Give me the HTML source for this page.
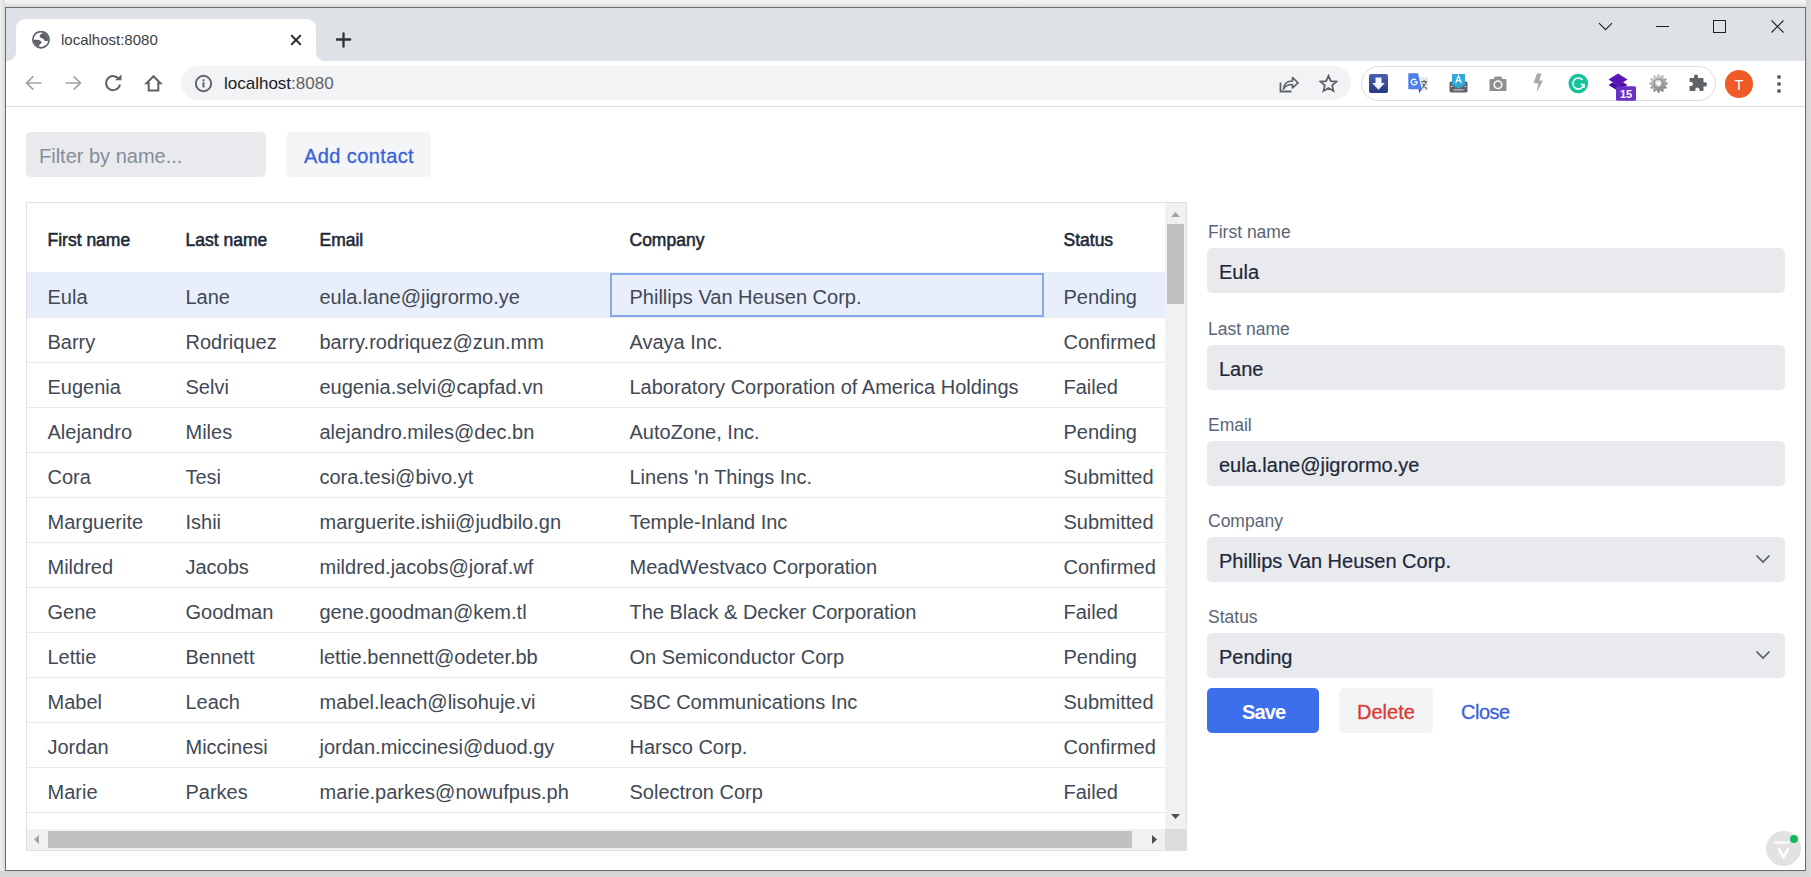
<!DOCTYPE html>
<html><head><meta charset="utf-8">
<style>
*{box-sizing:border-box;margin:0;padding:0}
html,body{width:1811px;height:877px;overflow:hidden;background:#ebebeb;font-family:"Liberation Sans",sans-serif;position:relative}
.a{position:absolute}
.t{position:absolute;white-space:pre;line-height:1}
#winbg{position:absolute;left:5px;top:7px;width:1801px;height:864px;background:#fff}
#frame{position:absolute;left:5px;top:7px;width:1801px;height:864px;border:1px solid #6b6b6b;z-index:50}
#tabstrip{position:absolute;left:6px;top:8px;width:1799px;height:53px;background:#dee1e6}
#tab{position:absolute;left:16px;top:19px;width:300px;height:42px;background:#fff;border-radius:9px 9px 0 0}
#tab:before,#tab:after{content:"";position:absolute;bottom:0;width:9px;height:9px}
#tab:before{left:-9px;background:radial-gradient(circle at 0 0,#dee1e6 8.5px,#fff 9.5px)}
#tab:after{right:-9px;background:radial-gradient(circle at 100% 0,#dee1e6 8.5px,#fff 9.5px)}
#toolbar{position:absolute;left:6px;top:61px;width:1799px;height:46px;background:#fff;border-bottom:1px solid #dadce0}
.hd{font-size:17.5px;font-weight:400;color:#1d2939;-webkit-text-stroke:.55px #1d2939}
.cell{font-size:20px;color:#404955}
.lbl{font-size:17.5px;color:#5a6575}
.val{font-size:20px;color:#1d2939;-webkit-text-stroke:.2px #1d2939}
.med{-webkit-text-stroke:.3px currentColor}
.bt{font-size:20px;font-weight:700}
</style></head><body>
<div class="a" style="left:0;top:0;width:1811px;height:7px;background:linear-gradient(#f4f4f4,#eeeeee 50%,#dcdcdc 85%,#e4e4e4)"></div>
<div class="a" style="left:0;top:0;width:5px;height:877px;background:linear-gradient(90deg,#f0f0f0,#dcdcdc)"></div>
<div class="a" style="left:0;top:871px;width:1811px;height:6px;background:linear-gradient(#d2d2d2,#dadada)"></div>
<div class="a" style="left:1806px;top:0;width:5px;height:877px;background:linear-gradient(90deg,#d4d4d4,#dedede)"></div>
<div id="winbg"></div>
<div id="tabstrip"></div>
<div id="tab"></div>
<!-- tab contents -->
<svg class="a" style="left:32px;top:31px" width="18" height="18" viewBox="0 0 18 18"><defs><clipPath id="gc"><circle cx="9" cy="8.700" r="7.300"/></clipPath></defs><circle cx="9" cy="8.700" r="8.100" fill="none" stroke="#5f6368" stroke-width="1.700"/><g clip-path="url(#gc)" fill="#5f6368"><path d="M10.200 .5v2C8.600 3.400 7.300 4.400 7.600 5.700c.4 1.300 2.800 1.300 3.800 2.200.9.800.8 1.600 1.600 2H17V.5z"/><path d="M0 8.800h3.500c1.800-.2 4 .1 5.300 1.300 1.100.9 1 1.900-.2 2.600-1 .5-1.500 1.300-1.300 2.600V18H0z"/></g></svg>
<div class="t" style="left:61px;top:32px;font-size:15px;color:#3c4043">localhost:8080</div>
<svg class="a" style="left:290px;top:33.500px" width="12" height="12" viewBox="0 0 12 12"><path d="M1.2 1.2l9.600 9.600M10.800 1.200l-9.600 9.600" stroke="#202124" stroke-width="1.9"/></svg>
<svg class="a" style="left:336px;top:32px" width="16" height="16" viewBox="0 0 16 16"><path d="M7.500 1.300v13.400M.8 7.500h13.400" stroke="#303338" stroke-width="2.300" stroke-linecap="round"/></svg>
<!-- window controls -->
<svg class="a" style="left:1598px;top:22px" width="15" height="9" viewBox="0 0 15 9"><path d="M1 1.2l6.5 6.5 6.5-6.5" fill="none" stroke="#202124" stroke-width="1.1"/></svg>
<div class="a" style="left:1656px;top:26px;width:13px;height:1px;background:#202124"></div>
<div class="a" style="left:1713px;top:20px;width:13px;height:13px;border:1px solid #202124"></div>
<svg class="a" style="left:1771px;top:20px" width="13" height="13" viewBox="0 0 13 13"><path d="M.5 .5l12 12M12.5 .5l-12 12" stroke="#202124" stroke-width="1.1"/></svg>

<div id="toolbar"></div>
<!-- nav icons -->
<svg class="a" style="left:25px;top:75px" width="17" height="16" viewBox="0 0 17 16"><path d="M16.5 8H1.8M8.300 1.300L1.600 8l6.700 6.700" fill="none" stroke="#9ea1a6" stroke-width="1.7"/></svg>
<svg class="a" style="left:65px;top:75px" width="17" height="16" viewBox="0 0 17 16"><path d="M.5 8h14.7M8.700 1.300L15.400 8l-6.700 6.700" fill="none" stroke="#9ea1a6" stroke-width="1.7"/></svg>
<svg class="a" style="left:104px;top:74px" width="19" height="18" viewBox="0 0 19 18"><path d="M15.200 5.600A7 7 0 1 0 16 10.500" fill="none" stroke="#5f6368" stroke-width="2"/><path d="M11 6.300h6.500V.6z" fill="#5f6368"/></svg>
<svg class="a" style="left:144px;top:74px" width="19" height="18" viewBox="0 0 19 18"><path d="M9.500 2.200L2.500 9.200h2.200v7.300h9.600V9.200h2.200z" fill="none" stroke="#5f6368" stroke-width="2" stroke-linejoin="miter"/></svg>
<div class="a" style="left:181px;top:66px;width:1170px;height:34px;border-radius:17px;background:#f1f3f4"></div>
<svg class="a" style="left:194px;top:74px" width="19" height="19" viewBox="0 0 19 19"><circle cx="9.500" cy="9.500" r="7.700" fill="none" stroke="#5f6368" stroke-width="1.900"/><rect x="8.500" y="8.200" width="2" height="5.300" fill="#5f6368"/><rect x="8.500" y="5.300" width="2" height="2" fill="#5f6368"/></svg>
<div class="t" style="left:224px;top:75px;font-size:17px;color:#202124">localhost<span style="color:#5f6368">:8080</span></div>
<svg class="a" style="left:1279px;top:74px" width="20" height="19" viewBox="0 0 20 19"><path d="M1.500 8.500v9h11" fill="none" stroke="#5f6368" stroke-width="1.800"/><path d="M4.500 15C5 9.500 8.500 7 13.500 7V3.500L19 8.800l-5.500 5.200V10.500C9.500 10.300 6.500 11.700 4.500 15z" fill="none" stroke="#5f6368" stroke-width="1.700" stroke-linejoin="round"/></svg>
<svg class="a" style="left:1319px;top:74px" width="19" height="19" viewBox="0 0 19 19"><path d="M9.500 1.800l2.300 5.300 5.700.5-4.300 3.800 1.300 5.600-5-3-5 3 1.300-5.600L1.500 7.600l5.700-.5z" fill="none" stroke="#5f6368" stroke-width="1.800" stroke-linejoin="miter"/></svg>
<div class="a" style="left:1361px;top:66px;width:355px;height:35px;border-radius:17.5px;border:1px solid #dadce0"></div>
<!-- download ext -->
<svg class="a" style="left:1369px;top:74px" width="19" height="19" viewBox="0 0 19 19"><defs><linearGradient id="gd" x1="0" y1="0" x2="0" y2="1"><stop offset="0" stop-color="#4a62b0"/><stop offset="1" stop-color="#27387e"/></linearGradient></defs><rect x="0" y="0" width="19" height="19" rx="2" fill="url(#gd)"/><path d="M6.500 3.500h6v5.500h3.300L9.500 15.800 3.200 9h3.300z" fill="#f4f6fb"/></svg>
<!-- translate ext -->
<svg class="a" style="left:1408px;top:73px" width="21" height="21" viewBox="0 0 21 21"><rect x="12.5" y="4" width="7.5" height="13.8" fill="#e9eaeb"/><path d="M13.3 8.6h5.8M16.2 7.3v1.3M18.3 8.6c-.8 3-2.400 5.300-4.800 7M14.600 10.500c.9 2.100 2.300 3.900 4.300 5.200" fill="none" stroke="#5a5d62" stroke-width="1.05"/><path d="M.3 .3H10L13.800 16.300H.3z" fill="#4b7fe9"/><path d="M10.500 16.300l.9 3.600 2.400-3.600z" fill="#3b3eb5"/><path d="M8 6.800A2.900 2.900 0 1 0 9 8.900H6.300" fill="none" stroke="#fff" stroke-width="1.300"/></svg>
<!-- keyboard ext -->
<svg class="a" style="left:1449px;top:73px" width="19" height="20" viewBox="0 0 19 20"><rect x=".5" y="8.500" width="18" height="11" rx="1.500" fill="#5f6368"/><path d="M3 1h13v11l-6.500 3.500L3 12z" fill="#33a7d6"/><path d="M6.700 10L9.500 2.800 12.300 10M7.700 7.700h3.600" fill="none" stroke="#fff" stroke-width="1.300"/><rect x="4.500" y="16.300" width="10" height="1.200" fill="#c9cbce"/><rect x="2" y="13" width="1.200" height="1" fill="#fff"/><rect x="15.800" y="13" width="1.200" height="1" fill="#fff"/></svg>
<!-- camera ext -->
<svg class="a" style="left:1489px;top:75px" width="18" height="17" viewBox="0 0 18 17"><path d="M1.500 4h3l1.500-2.500h6L13.500 4h3c.6 0 1 .4 1 1v10c0 .6-.4 1-1 1h-15c-.6 0-1-.4-1-1V5c0-.6.4-1 1-1z" fill="#8f8f8f"/><circle cx="9" cy="9.800" r="3.800" fill="none" stroke="#fff" stroke-width="1.500"/><circle cx="9" cy="9.800" r="1.500" fill="#8f8f8f"/></svg>
<!-- lightning ext -->
<svg class="a" style="left:1532px;top:73px" width="12" height="20" viewBox="0 0 12 20"><path d="M5 .5h4.500L7.300 7.500l3.700.3L4.500 19.500 6.300 10.500 1.500 10z" fill="#a9a9a9"/></svg>
<!-- grammarly -->
<svg class="a" style="left:1568px;top:73px" width="21" height="21" viewBox="0 0 21 21"><circle cx="10.300" cy="10.500" r="9.800" fill="#15c39a"/><path d="M14.600 7A5.500 5.500 0 1 0 15.500 12.500" fill="none" stroke="#fff" stroke-width="1.500"/><path d="M12.500 11.500h3.500v3.500" fill="none" stroke="#fff" stroke-width="1.500"/></svg>
<!-- purple stack -->
<svg class="a" style="left:1608px;top:73px" width="29" height="28" viewBox="0 0 29 28"><path d="M10 .5l9.500 6-9.500 6L.5 6.500z" fill="#5a14b8"/><path d="M.5 12l4.500-2.800 5 3 5-3 4.500 2.800-9.500 6z" fill="#4a0fa0"/><rect x="8" y="13.200" width="20" height="14.500" rx="1.500" fill="#6b30c6"/><text x="18" y="25" font-family="Liberation Sans" font-weight="bold" font-size="11" fill="#fff" text-anchor="middle">15</text></svg>
<!-- gear -->
<svg class="a" style="left:1649px;top:74px" width="19" height="19" viewBox="0 0 19 19"><defs><radialGradient id="gg" cx=".4" cy=".3" r=".75"><stop offset="0" stop-color="#dcdcdc"/><stop offset=".6" stop-color="#a8a8a8"/><stop offset="1" stop-color="#6e6e6e"/></radialGradient></defs><path d="M18.65 8.54 L18.65 10.46 L16.81 10.66 L16.41 12.15 L17.90 13.24 L16.94 14.91 L15.25 14.16 L14.16 15.25 L14.91 16.94 L13.24 17.90 L12.15 16.41 L10.66 16.81 L10.46 18.65 L8.54 18.65 L8.34 16.81 L6.85 16.41 L5.76 17.90 L4.09 16.94 L4.84 15.25 L3.75 14.16 L2.06 14.91 L1.10 13.24 L2.59 12.15 L2.19 10.66 L0.35 10.46 L0.35 8.54 L2.19 8.34 L2.59 6.85 L1.10 5.76 L2.06 4.09 L3.75 4.84 L4.84 3.75 L4.09 2.06 L5.76 1.10 L6.85 2.59 L8.34 2.19 L8.54 0.35 L10.46 0.35 L10.66 2.19 L12.15 2.59 L13.24 1.10 L14.91 2.06 L14.16 3.75 L15.25 4.84 L16.94 4.09 L17.90 5.76 L16.41 6.85 L16.81 8.34Z" fill="url(#gg)"/><circle cx="9.5" cy="9.5" r="4.6" fill="none" stroke="#8a8a8a" stroke-width="1.2"/><circle cx="9.5" cy="9.5" r="2.4" fill="#fafafa"/></svg>
<!-- puzzle -->
<svg class="a" style="left:1689px;top:74px" width="19" height="18" viewBox="0 0 19 18"><path d="M7 .5c1.300 0 2 .9 2 2V4h4.500c.6 0 1 .4 1 1v3.300h1.300c1.200 0 2.200.9 2.200 2.100s-1 2.100-2.200 2.100h-1.300V16c0 .6-.4 1-1 1H10.500v-1.300c0-1.200-.9-2.200-2.100-2.200s-2.100 1-2.100 2.200V17H1.500c-.6 0-1-.4-1-1V12h1.300c1.200 0 2.100-.9 2.100-2.100S3 7.800 1.800 7.800H.5V5c0-.6.4-1 1-1H5V2.500c0-1.100.7-2 2-2z" fill="#5f6368"/></svg>
<!-- avatar -->
<div class="a" style="left:1725px;top:70px;width:28px;height:28px;border-radius:50%;background:#f05a24"></div>
<div class="t" style="left:1731px;top:78px;font-size:14.5px;color:#fff;width:16px;text-align:center">T</div>
<div class="a" style="left:1776.500px;top:74.5px;width:4px;height:4px;border-radius:50%;background:#5f6368;box-shadow:0 7px 0 #5f6368,0 14px 0 #5f6368"></div>
<div id="page">
<!-- toolbar row -->
<div class="a" style="left:26px;top:132px;width:240px;height:45px;border-radius:5px;background:#e9eaee"></div>
<div class="t ph" style="left:39px;top:146px;font-size:20px;color:#858d97">Filter by name...</div>
<div class="a" style="left:286px;top:132px;width:145px;height:45px;border-radius:5px;background:#f3f5f7"></div>
<div class="t med" style="left:304px;top:146px;font-size:20px;color:#3a62d8;letter-spacing:.4px">Add contact</div>
<!-- grid -->
<div class="a" style="left:26px;top:202px;width:1161px;height:649px;border:1px solid #e0e0e0;background:#fff"></div>
<div class="a" style="left:27px;top:272px;width:1138px;height:45px;background:#e9eefb"></div>
<div class="a" style="left:27px;top:317px;width:1138px;height:1px;background:#e9eaec"></div>
<div class="a" style="left:27px;top:362px;width:1138px;height:1px;background:#e9eaec"></div>
<div class="a" style="left:27px;top:407px;width:1138px;height:1px;background:#e9eaec"></div>
<div class="a" style="left:27px;top:452px;width:1138px;height:1px;background:#e9eaec"></div>
<div class="a" style="left:27px;top:497px;width:1138px;height:1px;background:#e9eaec"></div>
<div class="a" style="left:27px;top:542px;width:1138px;height:1px;background:#e9eaec"></div>
<div class="a" style="left:27px;top:587px;width:1138px;height:1px;background:#e9eaec"></div>
<div class="a" style="left:27px;top:632px;width:1138px;height:1px;background:#e9eaec"></div>
<div class="a" style="left:27px;top:677px;width:1138px;height:1px;background:#e9eaec"></div>
<div class="a" style="left:27px;top:722px;width:1138px;height:1px;background:#e9eaec"></div>
<div class="a" style="left:27px;top:767px;width:1138px;height:1px;background:#e9eaec"></div>
<div class="a" style="left:27px;top:812px;width:1138px;height:1px;background:#e9eaec"></div>
<div class="t hd" style="left:47.5px;top:232px">First name</div>
<div class="t hd" style="left:185.5px;top:232px">Last name</div>
<div class="t hd" style="left:319.5px;top:232px">Email</div>
<div class="t hd" style="left:629.5px;top:232px">Company</div>
<div class="t hd" style="left:1063.5px;top:232px">Status</div>
<div class="t cell" style="left:47.5px;top:287px">Eula</div>
<div class="t cell" style="left:185.5px;top:287px">Lane</div>
<div class="t cell" style="left:319.5px;top:287px">eula.lane@jigrormo.ye</div>
<div class="t cell" style="left:629.5px;top:287px">Phillips Van Heusen Corp.</div>
<div class="t cell" style="left:1063.5px;top:287px">Pending</div>
<div class="t cell" style="left:47.5px;top:332px">Barry</div>
<div class="t cell" style="left:185.5px;top:332px">Rodriquez</div>
<div class="t cell" style="left:319.5px;top:332px">barry.rodriquez@zun.mm</div>
<div class="t cell" style="left:629.5px;top:332px">Avaya Inc.</div>
<div class="t cell" style="left:1063.5px;top:332px">Confirmed</div>
<div class="t cell" style="left:47.5px;top:377px">Eugenia</div>
<div class="t cell" style="left:185.5px;top:377px">Selvi</div>
<div class="t cell" style="left:319.5px;top:377px">eugenia.selvi@capfad.vn</div>
<div class="t cell" style="left:629.5px;top:377px">Laboratory Corporation of America Holdings</div>
<div class="t cell" style="left:1063.5px;top:377px">Failed</div>
<div class="t cell" style="left:47.5px;top:422px">Alejandro</div>
<div class="t cell" style="left:185.5px;top:422px">Miles</div>
<div class="t cell" style="left:319.5px;top:422px">alejandro.miles@dec.bn</div>
<div class="t cell" style="left:629.5px;top:422px">AutoZone, Inc.</div>
<div class="t cell" style="left:1063.5px;top:422px">Pending</div>
<div class="t cell" style="left:47.5px;top:467px">Cora</div>
<div class="t cell" style="left:185.5px;top:467px">Tesi</div>
<div class="t cell" style="left:319.5px;top:467px">cora.tesi@bivo.yt</div>
<div class="t cell" style="left:629.5px;top:467px">Linens 'n Things Inc.</div>
<div class="t cell" style="left:1063.5px;top:467px">Submitted</div>
<div class="t cell" style="left:47.5px;top:512px">Marguerite</div>
<div class="t cell" style="left:185.5px;top:512px">Ishii</div>
<div class="t cell" style="left:319.5px;top:512px">marguerite.ishii@judbilo.gn</div>
<div class="t cell" style="left:629.5px;top:512px">Temple-Inland Inc</div>
<div class="t cell" style="left:1063.5px;top:512px">Submitted</div>
<div class="t cell" style="left:47.5px;top:557px">Mildred</div>
<div class="t cell" style="left:185.5px;top:557px">Jacobs</div>
<div class="t cell" style="left:319.5px;top:557px">mildred.jacobs@joraf.wf</div>
<div class="t cell" style="left:629.5px;top:557px">MeadWestvaco Corporation</div>
<div class="t cell" style="left:1063.5px;top:557px">Confirmed</div>
<div class="t cell" style="left:47.5px;top:602px">Gene</div>
<div class="t cell" style="left:185.5px;top:602px">Goodman</div>
<div class="t cell" style="left:319.5px;top:602px">gene.goodman@kem.tl</div>
<div class="t cell" style="left:629.5px;top:602px">The Black &amp; Decker Corporation</div>
<div class="t cell" style="left:1063.5px;top:602px">Failed</div>
<div class="t cell" style="left:47.5px;top:647px">Lettie</div>
<div class="t cell" style="left:185.5px;top:647px">Bennett</div>
<div class="t cell" style="left:319.5px;top:647px">lettie.bennett@odeter.bb</div>
<div class="t cell" style="left:629.5px;top:647px">On Semiconductor Corp</div>
<div class="t cell" style="left:1063.5px;top:647px">Pending</div>
<div class="t cell" style="left:47.5px;top:692px">Mabel</div>
<div class="t cell" style="left:185.5px;top:692px">Leach</div>
<div class="t cell" style="left:319.5px;top:692px">mabel.leach@lisohuje.vi</div>
<div class="t cell" style="left:629.5px;top:692px">SBC Communications Inc</div>
<div class="t cell" style="left:1063.5px;top:692px">Submitted</div>
<div class="t cell" style="left:47.5px;top:737px">Jordan</div>
<div class="t cell" style="left:185.5px;top:737px">Miccinesi</div>
<div class="t cell" style="left:319.5px;top:737px">jordan.miccinesi@duod.gy</div>
<div class="t cell" style="left:629.5px;top:737px">Harsco Corp.</div>
<div class="t cell" style="left:1063.5px;top:737px">Confirmed</div>
<div class="t cell" style="left:47.5px;top:782px">Marie</div>
<div class="t cell" style="left:185.5px;top:782px">Parkes</div>
<div class="t cell" style="left:319.5px;top:782px">marie.parkes@nowufpus.ph</div>
<div class="t cell" style="left:629.5px;top:782px">Solectron Corp</div>
<div class="t cell" style="left:1063.5px;top:782px">Failed</div>
<div class="a" style="left:610px;top:273px;width:434px;height:44px;border:2px solid #88a9e8"></div>
<div class="a" style="left:1165px;top:203px;width:21px;height:626px;background:#f1f1f1"></div>
<svg class="a" style="left:1170px;top:211px" width="11" height="7" viewBox="0 0 11 7"><path d="M5.5 1L10 6H1z" fill="#a3a3a3"/></svg>
<div class="a" style="left:1167px;top:224px;width:17px;height:80px;background:#c1c1c1"></div>
<svg class="a" style="left:1170px;top:813px" width="11" height="7" viewBox="0 0 11 7"><path d="M5.5 6L10 1H1z" fill="#505050"/></svg>
<div class="a" style="left:27px;top:829px;width:1138px;height:21px;background:#f1f1f1"></div>
<svg class="a" style="left:33px;top:834px" width="7" height="11" viewBox="0 0 7 11"><path d="M1 5.5L6 1v9z" fill="#a3a3a3"/></svg>
<div class="a" style="left:48px;top:831px;width:1084px;height:17px;background:#c1c1c1"></div>
<svg class="a" style="left:1151px;top:834px" width="7" height="11" viewBox="0 0 7 11"><path d="M6 5.5L1 1v9z" fill="#505050"/></svg>
<div class="a" style="left:1165px;top:829px;width:21px;height:21px;background:#dcdcdc"></div>
<div class="t lbl" style="left:1208px;top:224px">First name</div>
<div class="a" style="left:1207px;top:248px;width:578px;height:45px;border-radius:5px;background:#e9eaee"></div>
<div class="t val" style="left:1219px;top:262px">Eula</div>
<div class="t lbl" style="left:1208px;top:321px">Last name</div>
<div class="a" style="left:1207px;top:345px;width:578px;height:45px;border-radius:5px;background:#e9eaee"></div>
<div class="t val" style="left:1219px;top:359px">Lane</div>
<div class="t lbl" style="left:1208px;top:417px">Email</div>
<div class="a" style="left:1207px;top:441px;width:578px;height:45px;border-radius:5px;background:#e9eaee"></div>
<div class="t val" style="left:1219px;top:455px">eula.lane@jigrormo.ye</div>
<div class="t lbl" style="left:1208px;top:513px">Company</div>
<div class="a" style="left:1207px;top:537px;width:578px;height:45px;border-radius:5px;background:#e9eaee"></div>
<div class="t val" style="left:1219px;top:551px">Phillips Van Heusen Corp.</div>
<svg class="a" style="left:1755px;top:554px" width="16" height="10" viewBox="0 0 16 10"><path d="M1.5 1.5l6.5 6.5 6.5-6.5" fill="none" stroke="#585e6b" stroke-width="1.7"/></svg><div class="t lbl" style="left:1208px;top:609px">Status</div>
<div class="a" style="left:1207px;top:633px;width:578px;height:45px;border-radius:5px;background:#e9eaee"></div>
<div class="t val" style="left:1219px;top:647px">Pending</div>
<svg class="a" style="left:1755px;top:650px" width="16" height="10" viewBox="0 0 16 10"><path d="M1.5 1.5l6.5 6.5 6.5-6.5" fill="none" stroke="#585e6b" stroke-width="1.7"/></svg>
<div class="a" style="left:1207px;top:688px;width:112px;height:45px;border-radius:5px;background:#3d6eec"></div>
<div class="t bt" style="left:1242px;top:702px;color:#fff;letter-spacing:-.9px">Save</div>
<div class="a" style="left:1339px;top:688px;width:94px;height:45px;border-radius:5px;background:#f3f4f6"></div>
<div class="t med" style="left:1357px;top:702px;font-size:20px;color:#d93a32">Delete</div>
<div class="t med" style="left:1461px;top:702px;font-size:20px;color:#3a62d8;letter-spacing:-.5px">Close</div>
<!-- dev tools -->
<div class="a" style="left:1766px;top:831px;width:35px;height:35px;border-radius:50%;background:#e2e2e2"></div>
<svg class="a" style="left:1772px;top:838px" width="22" height="22" viewBox="0 0 22 22"><path d="M2.5 4.5h15" stroke="#fff" stroke-width="2.2"/><path d="M6.5 10.5l5 8.500 5-8.500" fill="none" stroke="#fff" stroke-width="2.6"/></svg>
<div class="a" style="left:1790px;top:835px;width:8px;height:8px;border-radius:50%;background:#13b956"></div>
</div>
<div id="frame"></div>
</body></html>
